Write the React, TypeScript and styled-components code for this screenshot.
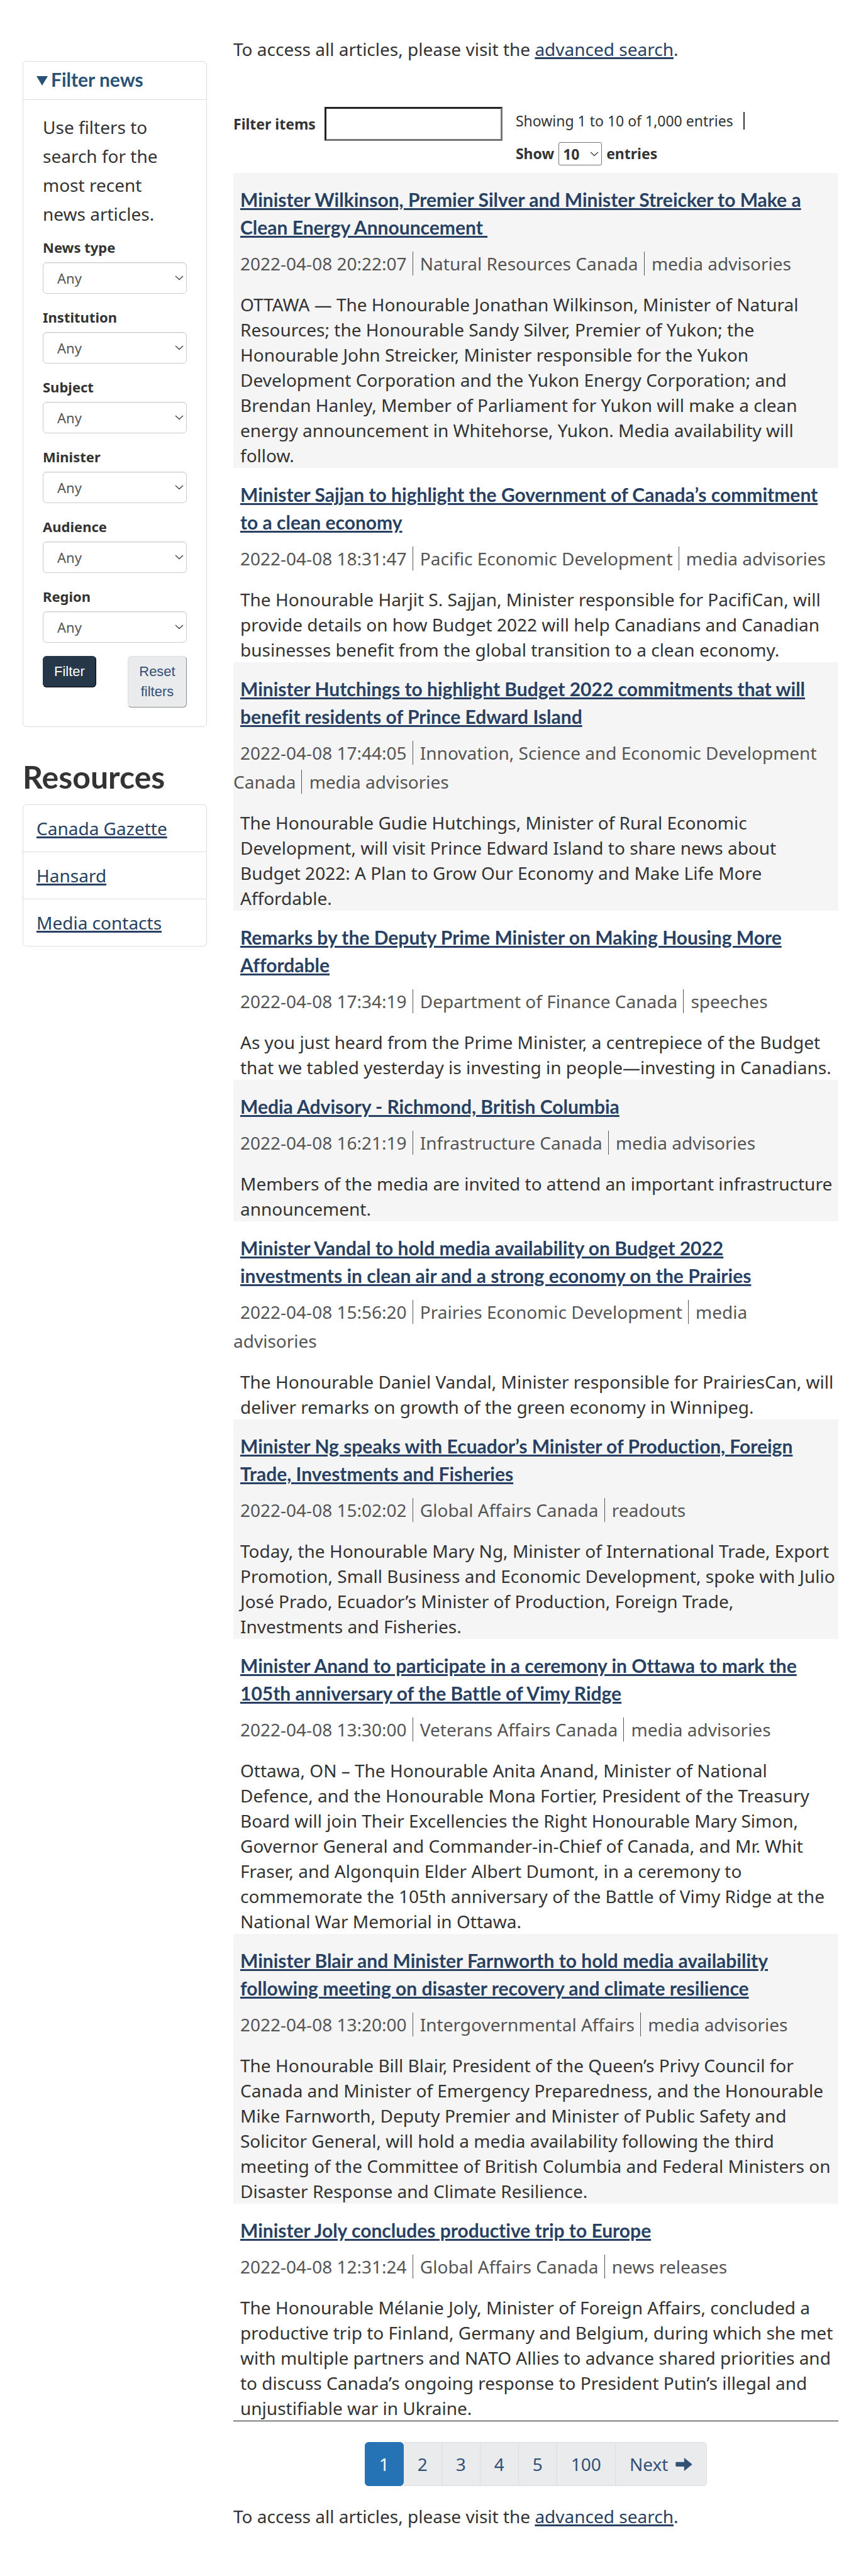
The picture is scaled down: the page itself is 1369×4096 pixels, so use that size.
import React from "react";
import styled, { createGlobalStyle } from "styled-components";

const noto = `"Noto Sans", "Open Sans", sans-serif`;
const lato = `Lato, "Noto Sans", sans-serif`;
const ink = "#333";
const link = "#284162";
const line = "#ddd";

const GlobalStyle = createGlobalStyle`
  *, *::before, *::after { box-sizing: border-box; }
  body { margin: 0; background: #fff; color: ${ink}; font: 400 28px/46px ${noto}; }
  p, h2, h3, ul { margin: 0; padding: 0; }
  ul { list-style: none; }
`;

const Page = styled.div`
  display: flex;
  align-items: flex-start;
  gap: 42px;
  padding: 55px 36px 73px;
`;

const Sidebar = styled.aside`
  flex: none;
  width: 293px;
  padding-top: 42px;
`;

const Main = styled.main`
  flex: 1;
  min-width: 0;
`;

const Link = styled.a`
  color: ${link};
  text-decoration: underline 3px;
  text-underline-offset: 2px;
`;

const Panel = styled.details`
  border: 1px solid ${line};
  border-radius: 6px;
`;

const PanelTitle = styled.summary`
  display: flex;
  align-items: center;
  gap: 5px;
  padding: 6px 21px 10px;
  border-bottom: 1px solid ${line};
  color: #295376;
  font: 700 30px/44px ${lato};
  font-variant-ligatures: none;
  &::-webkit-details-marker { display: none; }
  &::before {
    content: "";
    margin-top: 5px;
    border: 9px solid transparent;
    border-top: 15px solid #295376;
    border-bottom: 0;
  }
`;

const FilterForm = styled.form`
  padding: 20px 31px 30px;
`;

const Intro = styled.p`
  margin-bottom: 14px;
`;

const Field = styled.div`
  display: flex;
  flex-direction: column;
  margin-bottom: 21px;
`;

const FieldLabel = styled.label`
  margin-bottom: 8px;
  font: 700 22px/32px ${noto};
`;

const SelectBox = styled.span`
  position: relative;
  display: block;
`;

const Select = styled.select`
  display: block;
  width: 100%;
  height: 50px;
  padding: 0 22px;
  appearance: none;
  border: 1px solid #ccc;
  border-radius: 6px;
  background: #fff;
  box-shadow: inset 0 1px 1px rgba(0, 0, 0, 0.075);
  color: #555;
  font: 400 22px/32px ${noto};
`;

const ChevronIcon = styled.svg`
  position: absolute;
  top: 50%;
  right: 5px;
  width: 14px;
  height: 8px;
  margin-top: -4px;
  fill: none;
  stroke: #444;
  pointer-events: none;
`;

const Chevron = () => (
  <ChevronIcon viewBox="0 0 14 8" aria-hidden="true">
    <path d="M1 1l6 5.500L13 1" strokeWidth="1.4" />
  </ChevronIcon>
);

const Actions = styled.div`
  display: flex;
  justify-content: space-between;
  align-items: flex-start;
`;

const Button = styled.button<{ $primary?: boolean }>`
  width: ${(p) => (p.$primary ? 85 : 94)}px;
  padding: 8px 0;
  border: 1px solid;
  border-color: ${(p) => (p.$primary ? "#26374a #000 #000 #26374a" : "#dcdee1 #8a8b8d #8a8b8d #dcdee1")};
  border-radius: 6px;
  background: ${(p) => (p.$primary ? "#26374a" : "#eaebed")};
  color: ${(p) => (p.$primary ? "#fff" : "#335075")};
  font: 400 22px/32px "Liberation Sans", Arial, sans-serif;
  text-align: center;
`;

const ResourcesTitle = styled.h2`
  margin: 47px 0 12px;
  font: 700 50px/64px ${lato};
`;

const ResourceList = styled.ul`
  border: 1px solid ${line};
  border-radius: 6px;
`;

const Resource = styled.li`
  padding: 14px 21px;
  & + & { border-top: 1px solid ${line}; }
`;

const Toolbar = styled.div`
  display: flex;
  align-items: flex-start;
  gap: 21px;
  margin-top: 69px;
  font-size: 23px;
`;

const Search = styled.div`
  display: flex;
  align-items: center;
  gap: 14px;
  font-weight: 700;
`;

const SearchInput = styled.input`
  width: 283px;
  height: 54px;
  border: 3px solid;
  border-color: #212121 #767676 #767676 #212121;
  background: #fff;
  font: 400 22px/32px ${noto};
`;

const Info = styled.div`
  display: flex;
  flex-direction: column;
  align-items: flex-start;
  gap: 20px;
  padding-top: 8px;
`;

const Count = styled.span`
  padding-right: 16px;
  border-right: 2px solid ${ink};
  line-height: 28px;
`;

const Length = styled.label`
  display: flex;
  align-items: center;
  gap: 7px;
  font-weight: 700;
  line-height: 37px;
`;

const LengthSelect = styled(Select)`
  width: 69px;
  height: 37px;
  padding: 0 6px;
  border-color: #767676;
  border-radius: 3px;
  box-shadow: none;
  color: ${ink};
  font-size: 23px;
  font-weight: 700;
`;

const List = styled.div`
  margin-top: 12px;
  border-bottom: 1px solid #111;
`;

const Article = styled.article`
  padding-top: 20px;
  &:nth-child(odd) { background: #f5f5f5; }
`;

const Title = styled.h3`
  padding: 0 16px 0 11px;
  font: 700 30px/44px ${lato};
  font-variant-ligatures: none;
`;

const Meta = styled.p`
  margin: 13px 0 22px;
  padding-right: 11px;
  color: #555;
`;

const MetaPart = styled.span<{ $first?: boolean; $last?: boolean }>`
  margin-left: ${(p) => (p.$first ? 11 : 4)}px;
  padding-right: ${(p) => (p.$last ? 0 : 9)}px;
  border-right: ${(p) => (p.$last ? "0" : "1px solid #555")};
`;

const Body = styled.p`
  padding-left: 11px;
  line-height: 40px;
`;

const Pager = styled.ul`
  display: flex;
  justify-content: center;
  margin: 33px 0 25px;
`;

const PageLink = styled.a<{ $current?: boolean; $end?: boolean }>`
  display: flex;
  align-items: center;
  gap: 12px;
  height: 70px;
  padding: 0 22px;
  border: 1px solid ${(p) => (p.$current ? "#2572b4" : "#dcdee1")};
  border-left-width: ${(p) => (p.$current ? 1 : 0)}px;
  border-radius: ${(p) => (p.$current ? "6px" : p.$end ? "0 6px 6px 0" : "0")};
  background: ${(p) => (p.$current ? "#2572b4" : "#eaebed")};
  color: ${(p) => (p.$current ? "#fff" : "#335075")};
  text-decoration: none;
`;

const ArrowIcon = styled.svg`
  width: 27px;
  height: 21px;
  fill: currentColor;
`;

const filters = ["News type", "Institution", "Subject", "Minister", "Audience", "Region"];
const resources = ["Canada Gazette", "Hansard", "Media contacts"];
const pages = ["1", "2", "3", "4", "5", "100"];

const articles = [
  {
    title: "Minister Wilkinson, Premier Silver and Minister Streicker to Make a Clean Energy Announcement\u00a0",
    meta: ["2022-04-08 20:22:07", "Natural Resources Canada", "media advisories"],
    body: "OTTAWA — The Honourable Jonathan Wilkinson, Minister of Natural Resources; the Honourable Sandy Silver, Premier of Yukon; the Honourable John Streicker, Minister responsible for the Yukon Development Corporation and the Yukon Energy Corporation; and Brendan Hanley, Member of Parliament for Yukon will make a clean energy announcement in Whitehorse, Yukon. Media availability will follow.",
  },
  {
    title: "Minister Sajjan to highlight the Government of Canada’s commitment to a clean economy",
    meta: ["2022-04-08 18:31:47", "Pacific Economic Development", "media advisories"],
    body: "The Honourable Harjit S. Sajjan, Minister responsible for PacifiCan, will provide details on how Budget 2022 will help Canadians and Canadian businesses benefit from the global transition to a clean economy.",
  },
  {
    title: "Minister Hutchings to highlight Budget 2022 commitments that will benefit residents of Prince Edward Island",
    meta: ["2022-04-08 17:44:05", "Innovation, Science and Economic Development Canada", "media advisories"],
    body: "The Honourable Gudie Hutchings, Minister of Rural Economic Development, will visit Prince Edward Island to share news about Budget 2022: A Plan to Grow Our Economy and Make Life More Affordable.",
  },
  {
    title: "Remarks by the Deputy Prime Minister on Making Housing More Affordable",
    meta: ["2022-04-08 17:34:19", "Department of Finance Canada", "speeches"],
    body: "As you just heard from the Prime Minister, a centrepiece of the Budget that we tabled yesterday is investing in people—investing in Canadians.",
  },
  {
    title: "Media Advisory - Richmond, British Columbia",
    meta: ["2022-04-08 16:21:19", "Infrastructure Canada", "media advisories"],
    body: "Members of the media are invited to attend an important infrastructure announcement.",
  },
  {
    title: "Minister Vandal to hold media availability on Budget 2022 investments in clean air and a strong economy on the Prairies",
    meta: ["2022-04-08 15:56:20", "Prairies Economic Development", "media advisories"],
    body: "The Honourable Daniel Vandal, Minister responsible for PrairiesCan, will deliver remarks on growth of the green economy in Winnipeg.",
  },
  {
    title: "Minister Ng speaks with Ecuador’s Minister of Production, Foreign Trade, Investments and Fisheries",
    meta: ["2022-04-08 15:02:02", "Global Affairs Canada", "readouts"],
    body: "Today, the Honourable Mary Ng, Minister of International Trade, Export Promotion, Small Business and Economic Development, spoke with Julio José Prado, Ecuador’s Minister of Production, Foreign Trade, Investments and Fisheries.",
  },
  {
    title: "Minister Anand to participate in a ceremony in Ottawa to mark the 105th anniversary of the Battle of Vimy Ridge",
    meta: ["2022-04-08 13:30:00", "Veterans Affairs Canada", "media advisories"],
    body: "Ottawa, ON – The Honourable Anita Anand, Minister of National Defence, and the Honourable Mona Fortier, President of the Treasury Board will join Their Excellencies the Right Honourable Mary Simon, Governor General and Commander-in-Chief of Canada, and Mr. Whit Fraser, and Algonquin Elder Albert Dumont, in a ceremony to commemorate the 105th anniversary of the Battle of Vimy Ridge at the National War Memorial in Ottawa.",
  },
  {
    title: "Minister Blair and Minister Farnworth to hold media availability following meeting on disaster recovery and climate resilience",
    meta: ["2022-04-08 13:20:00", "Intergovernmental Affairs", "media advisories"],
    body: "The Honourable Bill Blair, President of the Queen’s Privy Council for Canada and Minister of Emergency Preparedness, and the Honourable Mike Farnworth, Deputy Premier and Minister of Public Safety and Solicitor General, will hold a media availability following the third meeting of the Committee of British Columbia and Federal Ministers on Disaster Response and Climate Resilience.",
  },
  {
    title: "Minister Joly concludes productive trip to Europe",
    meta: ["2022-04-08 12:31:24", "Global Affairs Canada", "news releases"],
    body: "The Honourable Mélanie Joly, Minister of Foreign Affairs, concluded a productive trip to Finland, Germany and Belgium, during which she met with multiple partners and NATO Allies to advance shared priorities and to discuss Canada’s ongoing response to President Putin’s illegal and unjustifiable war in Ukraine.",
  },
];

const AccessNote = () => (
  <p>
    To access all articles, please visit the <Link href="#search">advanced search</Link>.
  </p>
);

export default function App() {
  return (
    <>
      <GlobalStyle />
      <Page>
        <Sidebar>
          <Panel open>
            <PanelTitle>Filter news</PanelTitle>
            <FilterForm>
              <Intro>Use filters to search for the most recent news articles.</Intro>
              {filters.map((name) => (
                <Field key={name}>
                  <FieldLabel htmlFor={name}>{name}</FieldLabel>
                  <SelectBox>
                    <Select id={name}>
                      <option>Any</option>
                    </Select>
                    <Chevron />
                  </SelectBox>
                </Field>
              ))}
              <Actions>
                <Button type="button" $primary>Filter</Button>
                <Button type="reset">Reset filters</Button>
              </Actions>
            </FilterForm>
          </Panel>
          <ResourcesTitle>Resources</ResourcesTitle>
          <ResourceList>
            {resources.map((name) => (
              <Resource key={name}>
                <Link href="#resources">{name}</Link>
              </Resource>
            ))}
          </ResourceList>
        </Sidebar>
        <Main>
          <AccessNote />
          <Toolbar>
            <Search>
              <label htmlFor="search-items">Filter items</label>
              <SearchInput id="search-items" type="text" />
            </Search>
            <Info>
              <Count>Showing 1 to 10 of 1,000 entries</Count>
              <Length>
                Show
                <SelectBox>
                  <LengthSelect>
                    <option>10</option>
                  </LengthSelect>
                  <Chevron />
                </SelectBox>
                entries
              </Length>
            </Info>
          </Toolbar>
          <List>
            {articles.map(({ title, meta, body }) => (
              <Article key={title}>
                <Title>
                  <Link href="#article">{title}</Link>
                </Title>
                <Meta>
                  <MetaPart $first>{meta[0]}</MetaPart> <MetaPart>{meta[1]}</MetaPart>{" "}
                  <MetaPart $last>{meta[2]}</MetaPart>
                </Meta>
                <Body>{body}</Body>
              </Article>
            ))}
          </List>
          <nav aria-label="Pages">
            <Pager>
              {pages.map((n) => (
                <li key={n}>
                  <PageLink href="#page" $current={n === "1"}>{n}</PageLink>
                </li>
              ))}
              <li>
                <PageLink href="#page" $end>
                  Next
                  <ArrowIcon viewBox="0 0 39 31" aria-hidden="true">
                    <path d="M1.500 10H20V0l19 15.500L20 31V20.500H1.500Q0 20.500 0 19V11.500Q0 10 1.500 10z" />
                  </ArrowIcon>
                </PageLink>
              </li>
            </Pager>
          </nav>
          <AccessNote />
        </Main>
      </Page>
    </>
  );
}
